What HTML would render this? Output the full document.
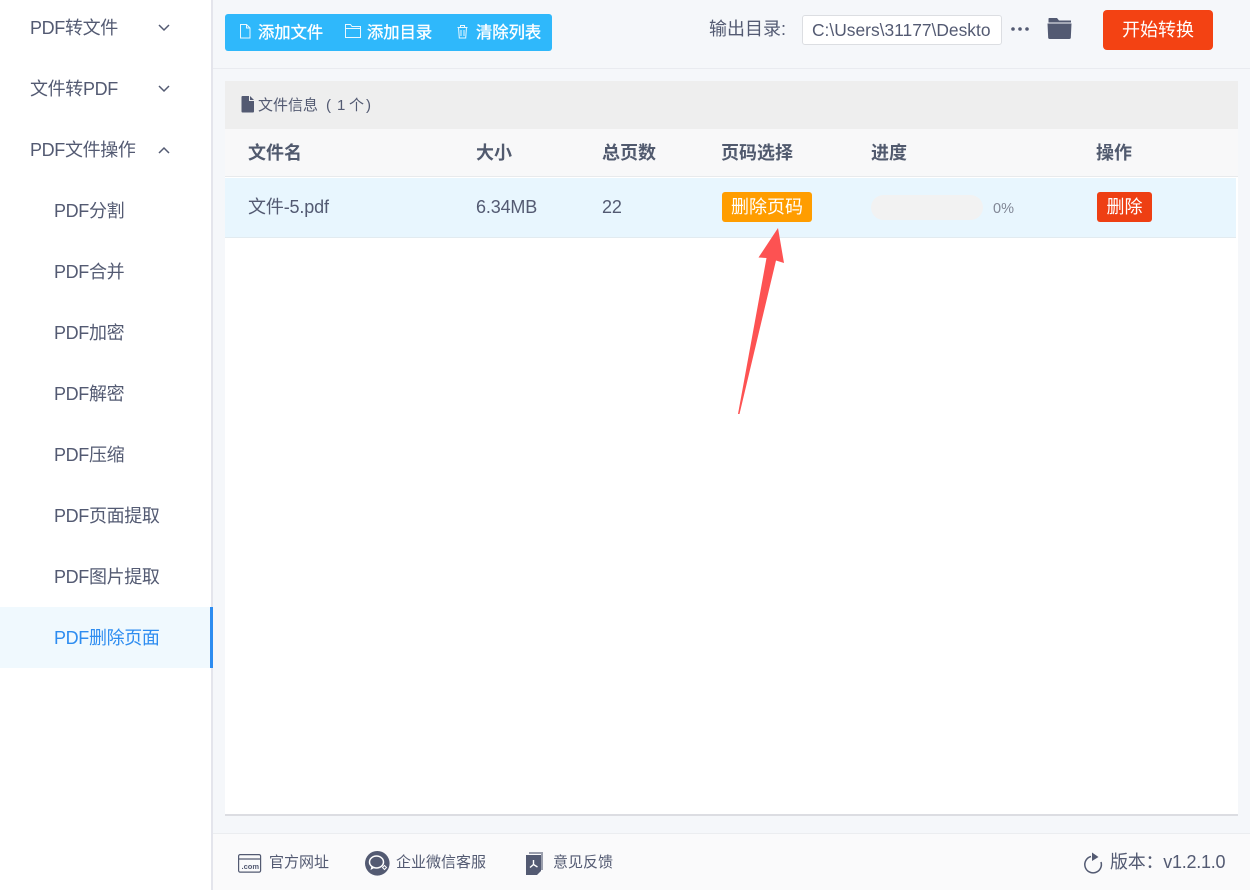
<!DOCTYPE html>
<html lang="zh"><head><meta charset="utf-8"><style>
*{box-sizing:border-box}
html,body{margin:0;padding:0}
body{width:1250px;height:890px;position:relative;overflow:hidden;background:#f5f7fa;font-family:"Liberation Sans","Noto Sans CJK SC",sans-serif;color:#535a72}
.a{position:absolute;white-space:nowrap}
.side{left:0;top:0;width:213px;height:890px;background:#fff;border-right:2px solid #e4e5ec}
.m{font-size:18px;line-height:24px;letter-spacing:-.35px}
.act{left:0;top:607px;width:213px;height:61px;background:#f0f9fe;border-right:3px solid #2d8cf0}
svg{position:absolute;overflow:visible}
.th{font-size:18px;font-weight:700;line-height:24px;top:141px;color:#515a6e}
.td{font-size:18px;line-height:24px;top:195px;color:#535a72;letter-spacing:-.15px}
.tb{font-size:16.3px;font-weight:400;-webkit-text-stroke:.35px #fff;color:#fff;line-height:22px;top:22px}
.f{font-size:15px;line-height:20px;top:853px;color:#535a72}
.i{font-size:15px;line-height:20px;top:96px;color:#535a72}
</style></head><body>
<div class="a side"></div>
<div class="a act"></div>
<div class="a m" style="left:30px;top:16px">PDF转文件</div>
<div class="a m" style="left:30px;top:77px">文件转PDF</div>
<div class="a m" style="left:30px;top:138px">PDF文件操作</div>
<div class="a m" style="left:54px;top:199px">PDF分割</div>
<div class="a m" style="left:54px;top:260px">PDF合并</div>
<div class="a m" style="left:54px;top:321px">PDF加密</div>
<div class="a m" style="left:54px;top:382px">PDF解密</div>
<div class="a m" style="left:54px;top:443px">PDF压缩</div>
<div class="a m" style="left:54px;top:504px">PDF页面提取</div>
<div class="a m" style="left:54px;top:565px">PDF图片提取</div>
<div class="a m" style="left:54px;top:626px;color:#2d8cf0">PDF删除页面</div>
<svg style="left:0;top:0" width="213" height="160" fill="none" stroke="#535a72" stroke-width="1.5"><path d="M159 25l5 5 5-5"/><path d="M159 86l5 5 5-5"/><path d="M159 153l5-5 5 5"/></svg>

<div class="a" style="left:213px;top:68px;width:1037px;height:1px;background:#e9ebf0"></div>
<div class="a" style="left:225px;top:14px;width:327px;height:37px;background:#2fb8fb;border-radius:3px"></div>
<svg style="left:225px;top:14px" width="327" height="37" fill="none" stroke="#fff" stroke-width="1"><path d="M15.500 10.500h6l3.500 3.500v10h-9.500z M21.500 10.500v3.500h3.500" opacity=".9"/><path d="M120.500 10.500h5l1.500 2h8.500v11h-15z M120.500 14.500h15" opacity=".9"/><path d="M232.500 13.500h10 M235.500 13.500v-2h4v2 M233.500 13.500l.8 10.500h6.400l.8-10.500 M236 16v6 M239 16v6" opacity=".9"/></svg>
<div class="a tb" style="left:258px">添加文件</div>
<div class="a tb" style="left:367px">添加目录</div>
<div class="a tb" style="left:476px">清除列表</div>

<div class="a" style="left:709px;top:17px;font-size:18px;line-height:24px">输出目录:</div>
<div class="a" style="left:802px;top:15px;width:200px;height:30px;background:#fff;border:1px solid #dcdee2;border-radius:3px;font-size:17.4px;line-height:28px;padding-left:9px;overflow:hidden;color:#535a72">C:\Users\31177\Deskto</div>
<svg style="left:1010px;top:20px" width="64" height="22" fill="#535a72"><circle cx="3" cy="9" r="1.800"/><circle cx="10" cy="9" r="1.800"/><circle cx="17" cy="9" r="1.800"/><path d="M39 -2h8l2 2.500h12v2H38.500v-3.500a1 1 0 0 1 .5-1z"/><path d="M37.500 3.500h24l-.7 14.500a1.500 1.500 0 0 1-1.500 1H39.700a1.500 1.500 0 0 1-1.500-1z"/></svg>
<div class="a" style="left:1103px;top:10px;width:110px;height:40px;background:#f34213;border-radius:4px;color:#fff;font-size:18px;line-height:40px;text-align:center">开始转换</div>

<div class="a" style="left:225px;top:81px;width:1013px;height:735px;background:#fff;border-bottom:2px solid #dcdde2"></div>
<div class="a" style="left:225px;top:81px;width:1013px;height:48px;background:#eeeeee"></div>
<svg style="left:241px;top:96px" width="14" height="17" fill="#535a72"><path d="M1.500 0H8v5h5v10.500a1 1 0 0 1-1 1H1.500a1 1 0 0 1-1-1V1a1 1 0 0 1 1-1z M9 0l4 4H9z"/></svg>
<div class="a i" style="left:258px">文件信息</div>
<div class="a i" style="left:326px">(</div>
<div class="a i" style="left:337px">1</div>
<div class="a i" style="left:349px">个</div>
<div class="a i" style="left:366px">)</div>
<div class="a" style="left:225px;top:129px;width:1013px;height:48px;background:#f8f8f9;border-bottom:1px solid #e8eaec"></div>
<div class="a th" style="left:248px">文件名</div>
<div class="a th" style="left:476px">大小</div>
<div class="a th" style="left:602px">总页数</div>
<div class="a th" style="left:721px">页码选择</div>
<div class="a th" style="left:871px">进度</div>
<div class="a th" style="left:1096px">操作</div>
<div class="a" style="left:225px;top:178px;width:1011px;height:60px;background:#e8f6fe;border-bottom:1px solid #e2ebf0"></div>
<div class="a td" style="left:248px">文件-5.pdf</div>
<div class="a td" style="left:476px">6.34MB</div>
<div class="a td" style="left:602px">22</div>
<div class="a" style="left:722px;top:192px;width:90px;height:30px;background:#ff9d00;border-radius:3px;color:#fff;font-size:18px;line-height:30px;text-align:center">删除页码</div>
<div class="a" style="left:871px;top:195px;width:112px;height:25px;background:#f2f2f2;border-radius:13px"></div>
<div class="a" style="left:993px;top:199px;font-size:14.500px;line-height:20px;color:#808695">0%</div>
<div class="a" style="left:1097px;top:192px;width:55px;height:30px;background:#ee3f13;border-radius:3px;color:#fff;font-size:18px;line-height:30px;text-align:center">删除</div>
<svg style="left:0;top:0" width="1250" height="890"><path d="M778 228L784 263L776 260.500L739.500 414L738 414L766.500 258L758.500 257.500Z" fill="#fd5252"/></svg>

<div class="a" style="left:213px;top:833px;width:1037px;height:57px;background:#fafafb;border-top:1px solid #ebedf0"></div>
<svg style="left:238px;top:854px" width="24" height="20" fill="none" stroke="#535a72" stroke-width="1.200"><rect x=".6" y=".6" width="22" height="17.500" rx="1.500"/><path d="M.6 5h22"/><text x="3.500" y="15" font-size="7.500" font-weight="700" fill="#535a72" stroke="none" font-family="Liberation Sans">.com</text></svg>
<div class="a f" style="left:269px">官方网址</div>
<svg style="left:365px;top:851px" width="25" height="25"><circle cx="12.300" cy="12.300" r="12.300" fill="#535a72"/><ellipse cx="11.500" cy="11" rx="7" ry="6" fill="none" stroke="#fff" stroke-width="1.500"/><path d="M6.500 15l-1 4 4.500-2.500z" fill="#fff"/><path d="M17.500 16.500l2-2 2 2-2 2z" fill="none" stroke="#fff"/></svg>
<div class="a f" style="left:396px">企业微信客服</div>
<svg style="left:525px;top:852px" width="20" height="24"><path d="M4 0h14v18h-2V2H4z" fill="#9a9eac"/><path d="M1 3h15v16l-4 4H1z" fill="#535a72"/><path d="M8.500 8v4.500M8.500 12.500L5 15.500M8.500 12.500L12.500 15" stroke="#fff" stroke-width="1.400" fill="none"/></svg>
<div class="a f" style="left:553px">意见反馈</div>
<svg style="left:1083px;top:852px" width="20" height="22" fill="none" stroke="#535a72" stroke-width="1.500"><path d="M8 4.500a8.300 8.300 0 1 0 10 5.500"/><path d="M9 .5l6.500 4.500-6.500 4z" fill="#535a72" stroke="none"/></svg>
<div class="a" style="left:1110px;top:850px;font-size:18px;line-height:24px;letter-spacing:-.25px">版本：v1.2.1.0</div>
</body></html>
